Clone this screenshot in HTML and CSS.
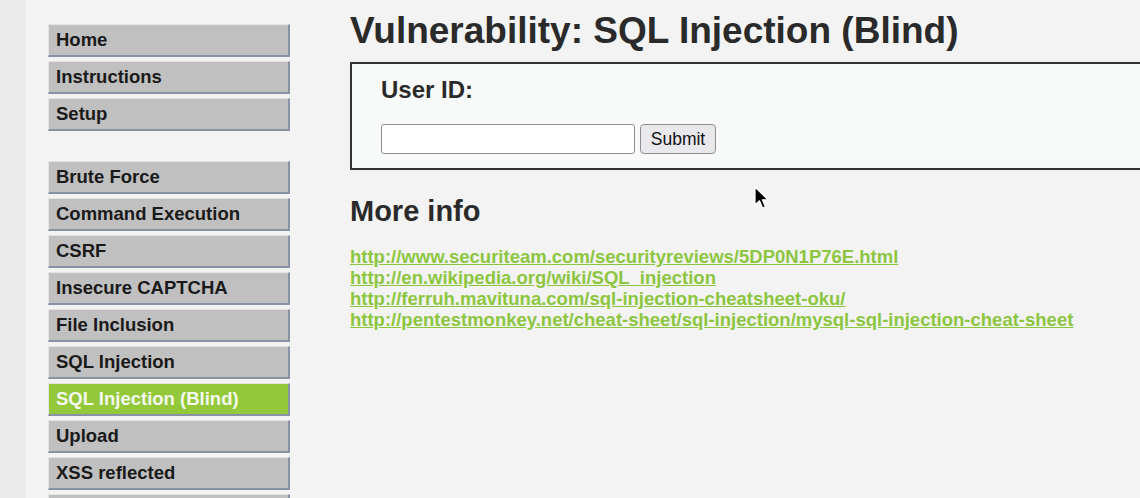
FILE: index.html
```html
<!DOCTYPE html>
<html>
<head>
<meta charset="utf-8">
<title>DVWA - SQL Injection (Blind)</title>
<link rel="stylesheet" href="styles.css">
</head>
<body>
<div class="page">
  <div class="strip"></div>
  <nav class="sidebar">
    <ul class="menu">
      <li><a href="#">Home</a></li>
      <li><a href="#">Instructions</a></li>
      <li><a href="#">Setup</a></li>
    </ul>
    <ul class="menu">
      <li><a href="#">Brute Force</a></li>
      <li><a href="#">Command Execution</a></li>
      <li><a href="#">CSRF</a></li>
      <li><a href="#">Insecure CAPTCHA</a></li>
      <li><a href="#">File Inclusion</a></li>
      <li><a href="#">SQL Injection</a></li>
      <li class="selected"><a href="#">SQL Injection (Blind)</a></li>
      <li><a href="#">Upload</a></li>
      <li><a href="#">XSS reflected</a></li>
      <li class="partial"></li>
    </ul>
  </nav>
  <main class="body">
    <h1>Vulnerability: SQL Injection (Blind)</h1>
    <div class="vulnerable_code_area">
      <form class="form">
        <p class="label">User ID:</p>
        <div class="row">
          <input type="text" class="field" name="id">
          <button type="button" class="submit">Submit</button>
        </div>
      </form>
    </div>
    <h2>More info</h2>
    <ul class="links">
      <li><a href="#">http://www.securiteam.com/securityreviews/5DP0N1P76E.html</a></li>
      <li><a href="#">http://en.wikipedia.org/wiki/SQL_injection</a></li>
      <li><a href="#">http://ferruh.mavituna.com/sql-injection-cheatsheet-oku/</a></li>
      <li><a href="#">http://pentestmonkey.net/cheat-sheet/sql-injection/mysql-sql-injection-cheat-sheet</a></li>
    </ul>
  </main>
</div>
<svg class="cursor" width="16" height="26" viewBox="0 0 16 26">
  <path d="M1 1 L1 19 L5.5 14.8 L8.6 22 L11.4 20.8 L8.4 13.8 L14 13.8 Z" fill="#000" stroke="#fff" stroke-width="1.2" stroke-linejoin="round"/>
</svg>
</body>
</html>
```
FILE: styles.css
```css
html, body {
  margin: 0;
  padding: 0;
  height: 100%;
  overflow: hidden;
}
body {
  background: #f3f3f3;
  font-family: "Liberation Sans", Arial, sans-serif;
  color: #222;
}
.page {
  display: flex;
  align-items: flex-start;
  min-height: 100%;
}
.strip {
  width: 26px;
  flex: none;
  align-self: stretch;
  background: #eaeaea;
}
.sidebar {
  flex: none;
  width: 242px;
  padding: 24px 0 0 22px;
}
.menu {
  list-style: none;
  margin: 0 0 30px 0;
  padding: 0;
  display: flex;
  flex-direction: column;
  gap: 4px;
}
.menu li {
  background: #c0c0c0;
  border-top: 1px solid #e4e4e4;
  border-left: 1px solid #e4e4e4;
  border-bottom: 2px solid #8792a5;
  border-right: 2px solid #8792a5;
  height: 30px;
}
.menu li a {
  display: block;
  padding-left: 7px;
  line-height: 30px;
  font-size: 18.5px;
  font-weight: bold;
  color: #1a1a1a;
  text-decoration: none;
  white-space: nowrap;
}
.menu li.selected {
  background: #92c83a;
}
.menu li.selected a {
  color: #f4f8ee;
}
.body {
  flex: none;
  width: 820px;
  padding-left: 60px;
}
h1 {
  margin: 10px 0 0 0;
  font-size: 37px;
  line-height: 42px;
  font-weight: bold;
  color: #2a2a2a;
  white-space: nowrap;
}
.vulnerable_code_area {
  margin-top: 10px;
  border: 2px solid #333;
  border-right: none;
  background: #f8f9f9;
  height: 104px;
  padding-left: 29px;
}
.form {
  margin: 0;
}
.label {
  margin: 12px 0 0 0;
  font-size: 24px;
  line-height: 28px;
  font-weight: bold;
  color: #2a2a2a;
}
.row {
  display: flex;
  gap: 5px;
  margin-top: 20px;
  align-items: center;
}
.field {
  width: 254px;
  height: 30px;
  box-sizing: border-box;
  border: 1px solid #8e8e8e;
  border-radius: 3px;
  background: #fff;
  margin: 0;
}
.submit {
  height: 30px;
  width: 76px;
  box-sizing: border-box;
  border: 1px solid #8e8e8e;
  border-radius: 4px;
  background: #e9e8ed;
  font-family: "Liberation Sans", Arial, sans-serif;
  font-size: 17.5px;
  color: #111;
  padding: 0;
}
h2 {
  margin: 24px 0 0 0;
  font-size: 29px;
  line-height: 34px;
  font-weight: bold;
  color: #2a2a2a;
}
.links {
  list-style: none;
  margin: 18px 0 0 0;
  padding: 0;
}
.links li {
  font-size: 18.5px;
  line-height: 21px;
}
.links a {
  font-weight: bold;
  color: #8cc63f;
  text-decoration: underline;
  white-space: nowrap;
}
.cursor {
  position: absolute;
  left: 754px;
  top: 186px;
}
```
